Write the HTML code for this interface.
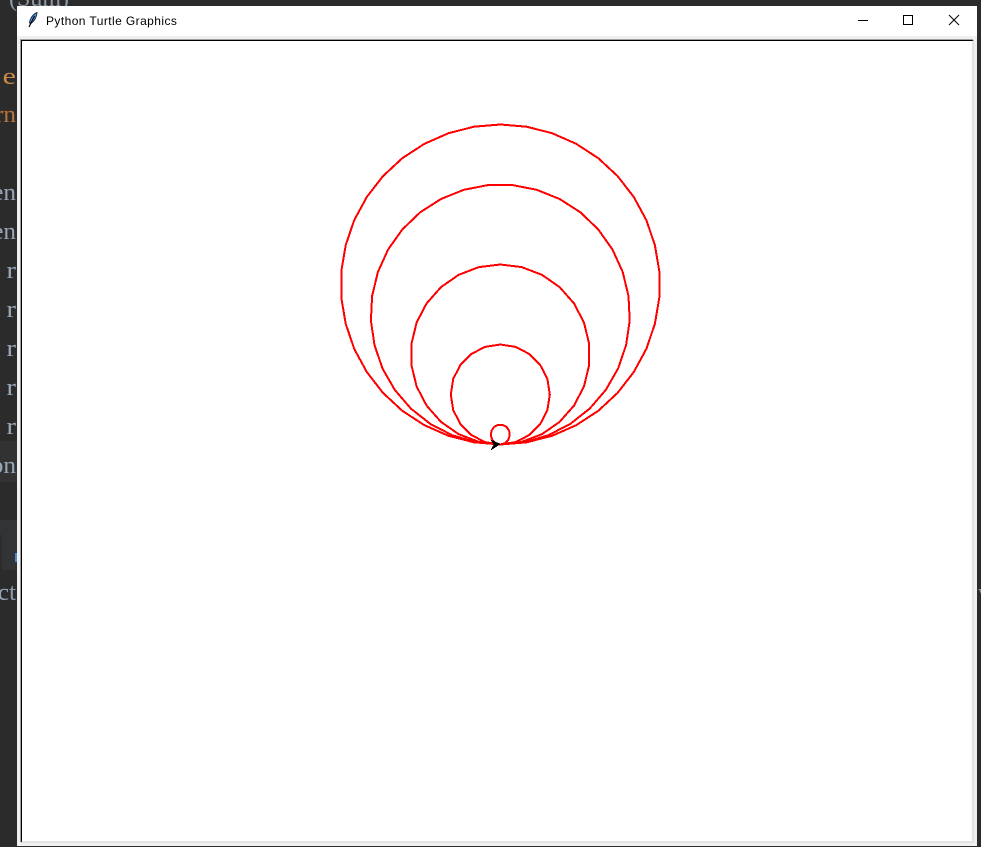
<!DOCTYPE html>
<html>
<head>
<meta charset="utf-8">
<title>Python Turtle Graphics</title>
<style>
html,body{margin:0;padding:0;width:981px;height:847px;overflow:hidden;background:#2b2b2b}
.abs,.t{position:absolute}
.t{font-family:"Liberation Serif",serif;font-size:24px;line-height:28px;color:#98a6b6;white-space:pre;text-align:right;width:60px;transform:scaleX(1.05);transform-origin:100% 50%}
#win{left:17px;top:6px;width:960px;height:840px;background:#f0f0f0}
#bar{left:0;top:0;width:960px;height:30px;background:#fff}
#title{left:29px;top:7px;font:12px/16px "Liberation Sans",sans-serif;letter-spacing:.42px;color:#000;white-space:pre}
#canvas{left:4px;top:34px;width:950px;height:800px;background:#fff;border-top:1px solid #000;border-left:1px solid #000;border-right:2px solid #e3e3e3;border-bottom:2px solid #e3e3e3;box-shadow:-1px -1px 0 #a0a0a0}
svg{position:absolute;left:0;top:0}
</style>
</head>
<body>
<div class="abs" style="left:0;top:441px;width:17px;height:41px;background:#323232"></div>
<div class="abs" style="left:0;top:520px;width:17px;height:50px;background:#313335"></div>
<div class="abs" style="left:0;top:535px;width:2px;height:35px;background:#2b2b2b"></div>
<div class="abs" style="left:15px;top:553px;width:2px;height:9px;background:#4a88c7"></div>

<div class="t" style="left:9px;top:-15px;width:auto;text-align:left;transform:none;color:#8e9aa8">(Sum)</div>
<div class="t" style="left:-44px;top:63px;color:#cc8a4a;transform:scaleX(1.25)">e</div>
<div class="t" style="left:-44px;top:101px;color:#b9743a">rn</div>
<div class="t" style="left:-44px;top:179px">en</div>
<div class="t" style="left:-44px;top:218px">en</div>
<div class="t" style="left:-44px;top:257px;transform:scaleX(1.2)">r</div>
<div class="t" style="left:-44px;top:296px;transform:scaleX(1.2)">r</div>
<div class="t" style="left:-44px;top:335px;transform:scaleX(1.2)">r</div>
<div class="t" style="left:-44px;top:374px;transform:scaleX(1.2)">r</div>
<div class="t" style="left:-44px;top:413px;transform:scaleX(1.2)">r</div>
<div class="t" style="left:-44px;top:452px">on</div>
<div class="t" style="left:-44px;top:579px">c<span style="color:#8a9bb0">t</span></div>
<div class="t" style="left:978px;top:579px;width:12px;text-align:left;transform:none;color:#7f8ea0">v</div>

<div id="win" class="abs">
  <div id="bar" class="abs"></div>
  <svg style="left:10px;top:6px" width="12" height="16" viewBox="0 0 12 16">
    <path d="M10 .5C6.500 2 3 6 2.500 11L4.500 11C7.500 9 9.500 5 10 .5Z" fill="#5b9be0" stroke="#1a2c4e" stroke-width="1"/>
    <path d="M7.500 4L2 15" stroke="#000" stroke-width="1.200" fill="none"/>
  </svg>
  <div id="title" class="abs">Python Turtle Graphics</div>
  <svg style="left:0;top:0" width="960" height="30" viewBox="0 0 960 30">
    <rect x="841" y="14" width="10" height="1" fill="#000"/>
    <rect x="886.5" y="9.5" width="9" height="9" fill="none" stroke="#000" stroke-width="1"/>
    <path d="M932 9L942 19M942 9L932 19" stroke="#000" stroke-width="1" fill="none"/>
  </svg>
  <div id="canvas" class="abs"></div>
</div>

<svg id="d" width="981" height="847" viewBox="0 0 981 847" shape-rendering="crispEdges">
  <g id="g" fill="none" stroke="#ff0000" stroke-width="2"></g>
  <path d="M500 444L491 450L494 444.500L491 440Z" fill="#000" stroke="#000" stroke-width=".5"/>
</svg>
<script>
var g=document.getElementById('g');
[[160,38],[130,33],[90,26],[50,20],[10,13]].forEach(function(c){
  var r=c[0],n=c[1],p=[];
  for(var k=0;k<n;k++){
    var a=2*Math.PI*k/n;
    p.push((500.3+(r-0.5)*Math.sin(a)).toFixed(1)+','+(444.5-r+r*Math.cos(a)).toFixed(1));
  }
  var e=document.createElementNS('http://www.w3.org/2000/svg','polygon');
  e.setAttribute('points',p.join(' '));
  g.appendChild(e);
});
</script>
</body>
</html>
